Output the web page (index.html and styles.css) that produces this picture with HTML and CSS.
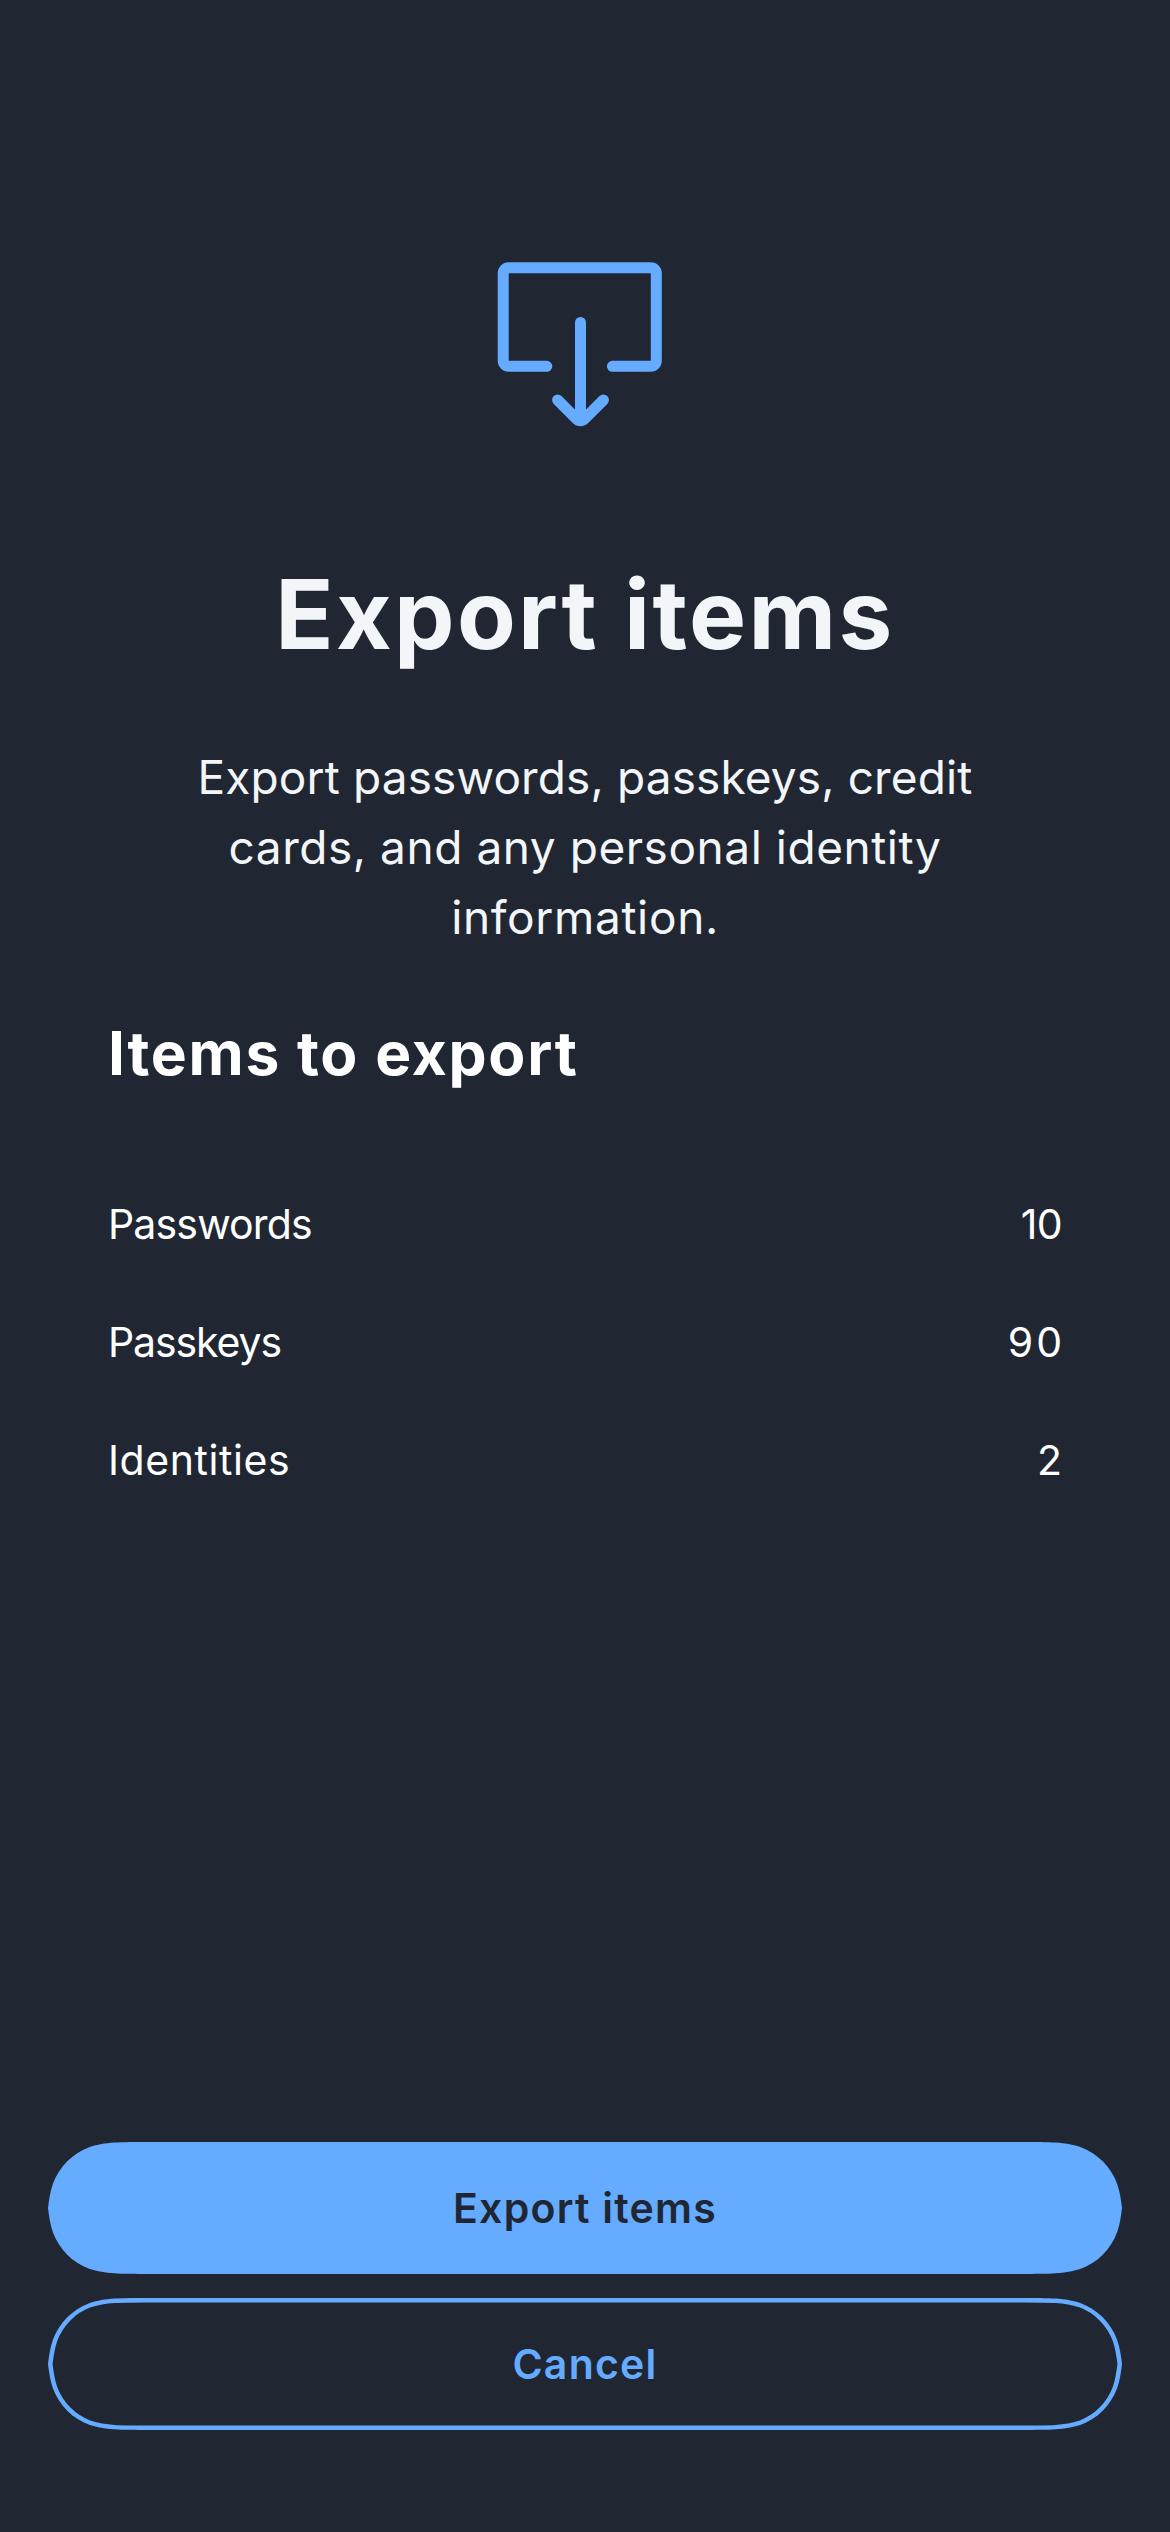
FILE: index.html
```html
<!DOCTYPE html>
<html lang="en">
<head>
<meta charset="utf-8">
<title>Export items</title>
<link rel="stylesheet" href="styles.css">
</head>
<body>
<main class="screen">
  <svg class="icon" viewBox="0 0 200 200" aria-hidden="true">
    <path d="M66.8 126.3H28.7a5.5 5.5 0 0 1-5.5-5.5V33.3a5.5 5.5 0 0 1 5.5-5.5H170.8a5.5 5.5 0 0 1 5.5 5.5V120.8a5.5 5.5 0 0 1-5.5 5.5H132.4"/>
    <path d="M100.5 82.5V179"/>
    <path d="M77.6 160L96.7 179.1a5.4 5.4 0 0 0 7.6 0L123.4 160"/>
  </svg>
  <h1 class="title">Export items</h1>
  <p class="intro">
    <span class="line line-1">Export passwords, passkeys, credit</span>
    <span class="line line-2">cards, and any personal identity</span>
    <span class="line line-3">information.</span>
  </p>
  <section class="summary">
    <h2 class="heading">Items to export</h2>
    <ul class="list">
      <li class="row"><span class="passwords">Passwords</span><span class="ten">10</span></li>
      <li class="row"><span class="passkeys">Passkeys</span><span class="ninety">90</span></li>
      <li class="row"><span class="identities">Identities</span><span>2</span></li>
    </ul>
  </section>
  <footer class="actions">
    <button class="button primary">
      <svg class="shape" viewBox="0 0 1074 132" aria-hidden="true">
        <path id="pill" d="M101 0H973C1002.200 0 1016.700 0 1032.300 4.900C1049.400 11.200 1062.800 24.600 1069.100 41.700C1072 50 1073 58 1074 66C1073 74 1072 82 1069.100 90.300C1062.800 107.400 1049.400 120.800 1032.300 127.100C1016.700 132 1002.200 132 973 132H101C71.800 132 57.300 132 41.700 127.100C24.600 120.800 11.200 107.400 4.900 90.300C2 82 1 74 0 66C1 58 2 50 4.900 41.700C11.200 24.600 24.600 11.200 41.700 4.900C57.300 0 71.800 0 101 0Z"/>
      </svg>
      <span class="label">Export items</span>
    </button>
    <button class="button secondary">
      <svg class="shape" viewBox="0 0 1074 132" aria-hidden="true">
        <clipPath id="inside"><use href="#pill"/></clipPath>
        <use href="#pill" clip-path="url(#inside)"/>
      </svg>
      <span class="label">Cancel</span>
    </button>
  </footer>
</main>
</body>
</html>
```

FILE: styles.css
```css
* { box-sizing: border-box; }

body {
  margin: 0;
  background: #202733;
  color: #fff;
  font-family: Inter, "Open Sans", sans-serif;
}

.screen {
  display: flex;
  flex-direction: column;
  height: 2532px;
  padding: 240px 48px 102px;
}

.icon {
  width: 200px;
  height: 200px;
  margin-left: 432px;
  fill: none;
  stroke: #65abff;
  stroke-width: 11;
  stroke-linecap: round;
  stroke-linejoin: round;
}

.title {
  margin: 114px 0 0;
  color: #f3f6f9;
  font-size: 96px;
  font-weight: 700;
  line-height: 120px;
  letter-spacing: 2.37px;
  text-align: center;
}

.intro {
  margin: 68px 0 0;
  color: #f3f6f9;
  font-size: 46px;
  line-height: 70px;
  text-align: center;
}

.line { display: block; }
.line-1 { letter-spacing: 0.13px; }
.line-2 { letter-spacing: 0.54px; }
.line-3 { letter-spacing: 0.65px; }

.summary { margin-top: 61px; padding: 0 60px; }

.heading {
  margin: 0;
  font-size: 60.5px;
  font-weight: 700;
  line-height: 80px;
  letter-spacing: 1.7px;
}

.list {
  margin: 72px 0 0;
  padding: 0;
  list-style: none;
  font-size: 41px;
}

.row {
  display: flex;
  align-items: center;
  justify-content: space-between;
  height: 118px;
}

.passwords { letter-spacing: -0.84px; }
.passkeys { letter-spacing: -1.1px; }
.identities { letter-spacing: 0.57px; }
.ten { letter-spacing: -0.7px; }
.ninety { letter-spacing: 3px; margin-right: -3px; }

.actions {
  display: grid;
  gap: 24px;
  margin-top: auto;
}

.button {
  display: grid;
  place-items: center;
  width: 1074px;
  height: 132px;
  padding: 0;
  border: 0;
  background: none;
  font: 600 41px/50px Inter, "Open Sans", sans-serif;
  letter-spacing: 1.25px;
}

.shape, .label { grid-area: 1 / 1; }
.shape { width: 1074px; height: 132px; }

.primary { color: #202733; }
.primary .shape { fill: #65abff; }
.secondary { color: #65abff; }
.secondary .shape { fill: none; stroke: #65abff; stroke-width: 9; }
```
